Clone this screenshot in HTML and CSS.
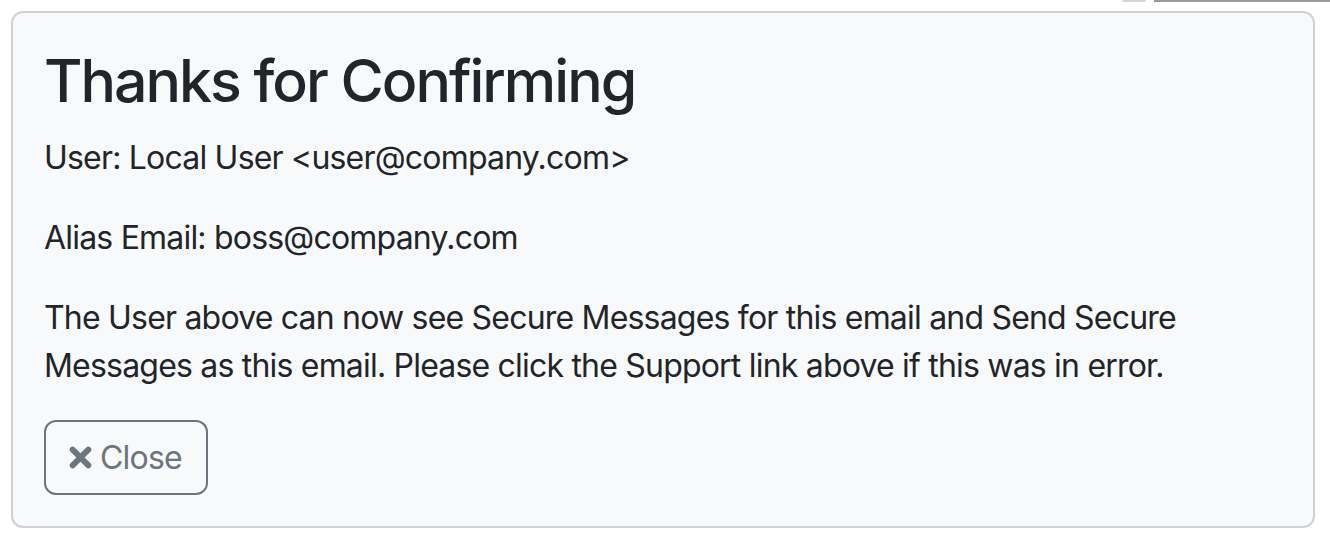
FILE: index.html
```html
<!DOCTYPE html>
<html lang="en">
<head>
<meta charset="utf-8">
<title>Thanks for Confirming</title>
<link rel="stylesheet" href="styles.css">
</head>
<body>
<div class="topstrip">
  <span class="top-btn"></span>
  <span class="top-bar"></span>
</div>
<div class="card">
  <h1 class="title">Thanks for Confirming</h1>
  <p class="line">User: Local User &lt;user@company.com&gt;</p>
  <p class="line">Alias Email: boss@company.com</p>
  <p class="line">The User above can now see Secure Messages for this email and Send Secure Messages as this email. Please click the Support link above if this was in error.</p>
  <button class="btn-close" type="button">
    <svg class="x-icon" viewBox="0 0 22 22" width="23" height="23" aria-hidden="true"><path d="M3.5 3.5 L18.5 18.5 M18.5 3.5 L3.5 18.5" stroke="currentColor" stroke-width="5.6" stroke-linecap="round" fill="none"/></svg>
    <span>Close</span>
  </button>
</div>
</body>
</html>
```

FILE: styles.css
```css
html, body {
  margin: 0;
  padding: 0;
  background: #ffffff;
}
body {
  font-family: Inter, "Liberation Sans", Arial, sans-serif;
  color: #212529;
  width: 1330px;
  height: 542px;
  overflow: hidden;
}
.topstrip {
  height: 2px;
  display: flex;
  justify-content: flex-end;
  align-items: flex-start;
  gap: 8px;
}
.top-btn {
  width: 24px;
  height: 2px;
  background: #d5d5d5;
  border-radius: 0 0 6px 6px;
}
.top-bar {
  width: 176px;
  height: 2px;
  background: #9a9a9a;
}
.card {
  margin: 9px 15px 0 11px;
  height: 517px;
  box-sizing: border-box;
  border: 2px solid #d0d1d2;
  border-radius: 12px;
  background: #f8f9fa;
  padding: 32px;
}
.title {
  margin: 0 0 17px -1px;
  font-size: 59px;
  font-weight: 500;
  line-height: 72px;
  letter-spacing: -2px;
}
.line {
  margin: 0 0 32px -1px;
  font-size: 32px;
  line-height: 48px;
  letter-spacing: -0.8px;
}
.btn-close {
  display: inline-flex;
  align-items: center;
  gap: 8px;
  height: 75px;
  padding: 0 24px 0 23px;
  margin-left: -1px;
  margin-top: -2px;
  border: 2px solid #6c757d;
  border-radius: 12px;
  background: transparent;
  color: #6c757d;
  font-family: inherit;
  font-size: 32px;
  letter-spacing: -0.8px;
}
.x-icon {
  display: block;
}
```
